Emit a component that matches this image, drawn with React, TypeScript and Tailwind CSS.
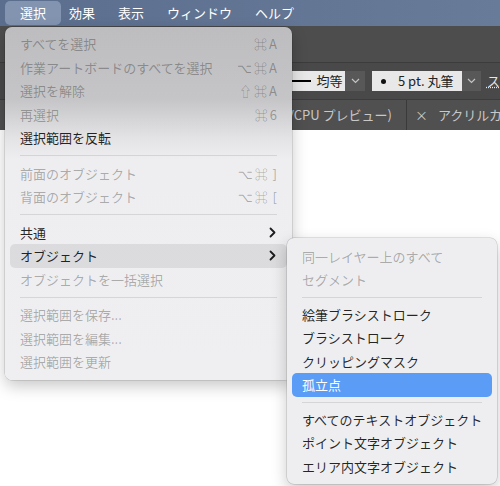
import React from "react";

type MenuEntry =
  | "sep"
  | {
      label: string;
      keys?: string[];
      disabled?: boolean;
      submenu?: boolean;
      hover?: boolean;
      selected?: boolean;
    };

const mainMenu: MenuEntry[] = [
  { label: "すべてを選択", keys: ["⌘", "A"], disabled: true },
  { label: "作業アートボードのすべてを選択", keys: ["⌥", "⌘", "A"], disabled: true },
  { label: "選択を解除", keys: ["⇧", "⌘", "A"], disabled: true },
  { label: "再選択", keys: ["⌘", "6"], disabled: true },
  { label: "選択範囲を反転" },
  "sep",
  { label: "前面のオブジェクト", keys: ["⌥", "⌘", " ]"], disabled: true },
  { label: "背面のオブジェクト", keys: ["⌥", "⌘", " ["], disabled: true },
  "sep",
  { label: "共通", submenu: true },
  { label: "オブジェクト", submenu: true, hover: true },
  { label: "オブジェクトを一括選択", disabled: true },
  "sep",
  { label: "選択範囲を保存...", disabled: true },
  { label: "選択範囲を編集...", disabled: true },
  { label: "選択範囲を更新", disabled: true },
];

const objectMenu: MenuEntry[] = [
  { label: "同一レイヤー上のすべて", disabled: true },
  { label: "セグメント", disabled: true },
  "sep",
  { label: "絵筆ブラシストローク" },
  { label: "ブラシストローク" },
  { label: "クリッピングマスク" },
  { label: "孤立点", selected: true },
  "sep",
  { label: "すべてのテキストオブジェクト" },
  { label: "ポイント文字オブジェクト" },
  { label: "エリア内文字オブジェクト" },
];

function Chevron() {
  return (
    <svg width="7" height="11" viewBox="0 0 7 11" className="mr-[1px]">
      <polyline
        points="1.5,1.5 5.5,5.5 1.5,9.5"
        fill="none"
        stroke="#1c1c1c"
        strokeWidth="1.8"
        strokeLinecap="round"
        strokeLinejoin="round"
      />
    </svg>
  );
}

function DropChevron() {
  return (
    <svg width="9" height="6" viewBox="0 0 9 6">
      <polyline
        points="1,1 4.5,4.5 8,1"
        fill="none"
        stroke="#c4c4c4"
        strokeWidth="1.2"
      />
    </svg>
  );
}

function MenuRows({ entries, sepClass }: { entries: MenuEntry[]; sepClass: string }) {
  return (
    <>
      {entries.map((e, i) =>
        e === "sep" ? (
          <div key={i} className={`flex items-center px-[15px] ${sepClass}`}>
            <div className="h-px w-full bg-black/10" />
          </div>
        ) : (
          <div
            key={i}
            className={`mx-[5px] flex h-[23.5px] items-center justify-between rounded-[5px] px-[10px] text-[13px] leading-none ${
              e.selected
                ? "bg-[#5b9cf7] text-white"
                : e.hover
                  ? "bg-black/[0.08] text-black/85"
                  : e.disabled
                    ? "text-black/30"
                    : "text-black/85"
            }`}
          >
            <span className="whitespace-nowrap">{e.label}</span>
            {e.keys && (
              <span className="flex items-center gap-[2px] whitespace-pre">
                {e.keys.map((k, j) => (
                  <span key={j}>{k}</span>
                ))}
              </span>
            )}
            {e.submenu && <Chevron />}
          </div>
        )
      )}
    </>
  );
}

export default function App() {
  const menuBar = ["効果", "表示", "ウィンドウ", "ヘルプ"];

  return (
    <div className="relative flex h-[486px] w-[500px] flex-col overflow-hidden bg-white font-['Noto_Sans_CJK_JP','DejaVu_Sans',sans-serif]">
      {/* system menu bar */}
      <header className="flex h-[26px] shrink-0 items-center bg-gradient-to-r from-[#5b6e8e] to-[#687b98] text-[13px] text-white">
        <div className="ml-[5px] flex h-[24px] w-[56px] items-center justify-center rounded-[5px] bg-[#8294b0]">
          選択
        </div>
        <div className="ml-[8px] flex gap-[23px]">
          {menuBar.map((m) => (
            <span key={m}>{m}</span>
          ))}
        </div>
      </header>

      {/* app chrome */}
      <div className="h-[37px] shrink-0 border-b border-[#3c3c3c] bg-[#4d4d4d]" />
      <div className="flex h-[37px] shrink-0 items-center border-b border-[#3c3c3c] bg-[#494949]">
        <div className="ml-[250px] flex h-[20px] w-[98px] items-center justify-end gap-[5px] bg-[#e8e8e8] pr-[3px] text-[13px] text-[#222]">
          <div className="h-[2px] w-[22px] bg-black" />
          <span>均等</span>
        </div>
        <div className="flex h-[20px] w-[20px] items-center justify-center bg-[#585858]">
          <DropChevron />
        </div>
        <div className="ml-[7px] flex h-[20px] w-[92px] items-center bg-[#e8e8e8] text-[13px] text-[#222]">
          <div className="ml-[9px] h-[5px] w-[5px] rounded-full bg-[#111]" />
          <span className="ml-[12px]">5 pt. 丸筆</span>
        </div>
        <div className="flex h-[20px] w-[20px] items-center justify-center bg-[#585858]">
          <DropChevron />
        </div>
        <span className="ml-[6px] whitespace-nowrap text-[13px] text-[#e6e6e6] underline decoration-dotted">
          ス
        </span>
      </div>
      <div className="flex h-[30px] shrink-0 items-center bg-[#505050] text-[13px] text-[#c8c8c8]">
        <div className="ml-[292px] flex h-full w-[115px] shrink-0 items-center justify-end overflow-hidden border-r border-[#3a3a3a] pr-[14px]">
          <span className="shrink-0 whitespace-nowrap">/CPU プレビュー)</span>
        </div>
        <span className="ml-[8px]">×</span>
        <span className="ml-[10px] whitespace-nowrap">アクリルカット.ai</span>
      </div>
      <div className="flex-1 bg-white" />

      {/* 選択 menu */}
      <div className="absolute left-[5px] top-[27px] w-[287px] rounded-[7px] bg-[linear-gradient(to_bottom,#bdbdbf_0px,#c5c5c7_72px,#e4e4e6_112px,#eeeef0_132px,#efeff1_100%)] pt-[5px] pb-[6px] shadow-[0_6px_16px_rgba(0,0,0,0.22),0_0_0_0.5px_rgba(0,0,0,0.2)]">
        <MenuRows entries={mainMenu} sepClass="h-[12px]" />
      </div>

      {/* オブジェクト submenu */}
      <div className="absolute left-[287px] top-[238px] w-[210px] rounded-[7px] bg-[#eeeef0] pt-[6.5px] pb-[6px] shadow-[0_6px_16px_rgba(0,0,0,0.22),0_0_0_0.5px_rgba(0,0,0,0.2)]">
        <MenuRows entries={objectMenu} sepClass="h-[11px]" />
      </div>
    </div>
  );
}
